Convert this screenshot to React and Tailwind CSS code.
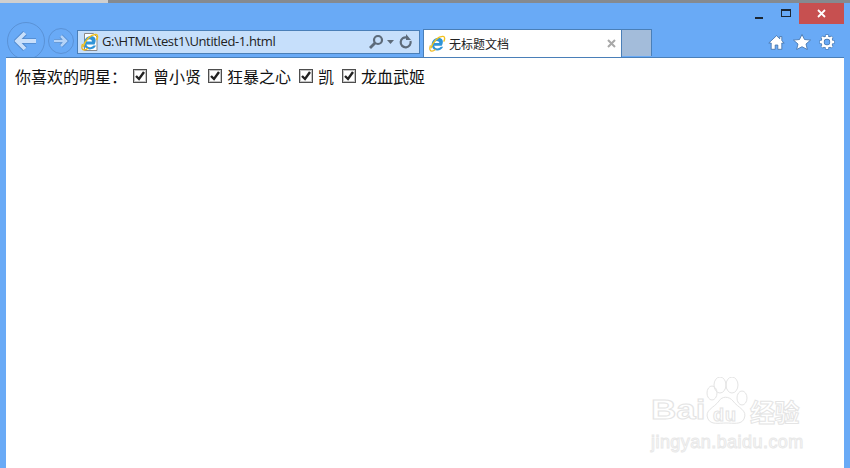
import React from 'react';

const Check = () => (
  <span className="w-[14px] h-[14px] border border-[#4d4d4d] shadow-[inset_0_0_0_1px_#c4c4c4] bg-white flex items-center justify-center shrink-0">
    <svg width="10" height="10" viewBox="0 0 10 10">
      <path d="M1 5l3 3 5-7" fill="none" stroke="#222" strokeWidth="2.400" />
    </svg>
  </span>
);

const IeIcon = ({ size, doc }) => (
  <svg width={size} height={size} viewBox="0 0 18 18">
    {doc && <path d="M3.500 .5h9l3.500 3.500v13.500h-12.500z" fill="#fff" stroke="#8a8a8a" strokeWidth="1" />}
    <path d="M13.500 11.500h-8c.3 3 4.500 4 7 1h2.500c-2 5-10.500 5.500-12-.500-1-5 2.500-9 7-9s6 4 3.500 8.500zM5.500 8.500h5.500c-.2-3-5-3-5.500 0z" fill="#2f94d8" />
    <path d="M2 14C4 7 10 1 15 1.500c2 .3 2 3 .5 5.500" fill="none" stroke="#f2c21c" strokeWidth="1.500" />
    <path d="M1.500 11C.5 14 .5 17 3 17c1.500 0 3-1 4-1.800" fill="none" stroke="#f0b71a" strokeWidth="1.300" />
  </svg>
);

const BackArrow = () => (
  <svg width="24" height="20" viewBox="0 0 24 20">
    <path d="M22 10H4M11 2l-8 8 8 8" fill="none" stroke="#4f88cc" strokeWidth="5.500" />
    <path d="M22 10H4M11 2l-8 8 8 8" fill="none" stroke="#c8dffb" strokeWidth="3.800" />
  </svg>
);

const ForwardArrow = () => (
  <svg width="16" height="14" viewBox="0 0 16 14">
    <path d="M1 7h12M8 2l5 5-5 5" fill="none" stroke="#4f88cc" strokeWidth="4" />
    <path d="M1 7h12M8 2l5 5-5 5" fill="none" stroke="#b4d3f8" strokeWidth="2.600" />
  </svg>
);

const items = [
  { name: '曾小贤', cls: 'ml-[6px] mr-[7px]' },
  { name: '狂暴之心', cls: 'ml-[5px] mr-[8px]' },
  { name: '凯', cls: 'ml-[5px] mr-[8px]' },
  { name: '龙血武姬', cls: 'ml-[5px]' },
];

const App = () => {
  return (
    <div className="w-[850px] h-[468px] overflow-hidden bg-[#69aaf6] flex flex-col font-['Noto_Sans_CJK_SC','Noto_Sans',sans-serif]">
      {/* window top edge */}
      <div className="h-[3px] flex shrink-0">
        <div className="w-[108px] bg-[#cfcfcf]"></div>
        <div className="flex-1 bg-[#858a90]"></div>
      </div>

      {/* caption buttons */}
      <div className="h-[21px] shrink-0 flex justify-end pr-[6px]">
        <div className="w-[28px] flex items-end justify-center pb-[5px]">
          <div className="w-[8px] h-[2px] bg-[#1c2733]"></div>
        </div>
        <div className="w-[26px] flex items-start justify-center pt-[6px]">
          <div className="w-[10px] h-[8px] border border-[#1c2733] border-t-2"></div>
        </div>
        <div className="w-[45px] bg-[#c75050] flex items-center justify-center">
          <svg width="9" height="9" viewBox="0 0 9 9">
            <path d="M1 1l7 7M8 1l-7 7" stroke="#fff" strokeWidth="1.800" />
          </svg>
        </div>
      </div>

      {/* toolbar */}
      <div className="h-[33px] shrink-0 flex items-end pl-[7px]">
        <div className="w-[38px] h-[38px] mb-[-3px] shrink-0 rounded-full border border-[#5a92d6] flex items-center justify-center">
          <BackArrow />
        </div>
        <div className="w-[26px] h-[26px] mb-[3px] ml-[3px] shrink-0 rounded-full border border-[#5a92d6] flex items-center justify-center">
          <ForwardArrow />
        </div>
        <div className="w-[343px] h-[24px] mb-[3px] ml-[3px] shrink-0 bg-[#c6dffb] border border-[#4a7fb8] flex items-center pl-[3px] pr-[4px]">
          <IeIcon size={18} doc />
          <span className="ml-[3px] flex-1 text-[13px] text-[#222] font-['Open_Sans',sans-serif] tracking-[-0.37px]">G:\HTML\test1\Untitled-1.html</span>
          <svg width="46" height="16" viewBox="0 0 46 16">
            <circle cx="9" cy="6" r="4" fill="none" stroke="#5d6b7a" strokeWidth="2.200" />
            <path d="M6 9l-5 5" stroke="#5d6b7a" strokeWidth="2.800" />
            <path d="M18 6h7l-3.500 4z" fill="#5d6b7a" />
            <path d="M38 3.500a5 5 0 1 0 3.500 3.500" fill="none" stroke="#5d6b7a" strokeWidth="2.200" />
            <path d="M37 0v6h5z" fill="#5d6b7a" />
          </svg>
        </div>
        <div className="w-[199px] h-[28px] ml-[3px] shrink-0 bg-white border-t border-x border-[#4a7fb8] flex items-center pl-[5px] pr-[5px]">
          <IeIcon size={17} />
          <span className="ml-[3px] flex-1 text-[12px] text-[#222]">无标题文档</span>
          <svg width="9" height="9" viewBox="0 0 9 9">
            <path d="M1 1l7 7M8 1l-7 7" stroke="#a8a8a8" strokeWidth="2" />
          </svg>
        </div>
        <div className="w-[30px] h-[27px] mb-[1px] shrink-0 bg-[#a3bcda] border-t border-r border-[#4a7fb8]"></div>
        <div className="flex-1 self-stretch flex items-center justify-end gap-[8px] pr-[15px] pt-[3px]">
          <svg width="17" height="15" viewBox="0 0 17 15">
            <path d="M8.500 .7L.8 8h2.400v6.300h4v-4.300h2.600v4.300h4V8h2.400l-2.400-2.300V1.500h-2v2.300z" fill="#fff" stroke="#3f6fa6" strokeWidth="0.800" />
          </svg>
          <svg width="18" height="16" viewBox="0 0 18 16">
            <path d="M9 .5l2.500 5 6 .6-4.500 3.900 1.300 5.500L9 12.700l-5.300 2.800L5 10 .5 6.100l6-.6z" fill="#fff" stroke="#3f6fa6" strokeWidth="0.800" />
          </svg>
          <svg width="16" height="16" viewBox="0 0 16 16">
            <path d="M8 .5v3M8 12.500v3M.5 8h3M12.500 8h3M2.700 2.700l2.100 2.100M11.200 11.200l2.100 2.100M13.300 2.700l-2.100 2.100M4.800 11.200l-2.100 2.100" stroke="#3f6fa6" strokeWidth="3.400" />
            <circle cx="8" cy="8" r="4.400" fill="none" stroke="#3f6fa6" strokeWidth="3.600" />
            <path d="M8 .9v3M8 12.100v3M.9 8h3M12.100 8h3M3 3l2 2M11 11l2 2M13 3l-2 2M5 11l-2 2" stroke="#fff" strokeWidth="2.400" />
            <circle cx="8" cy="8" r="4.400" fill="none" stroke="#fff" strokeWidth="2.400" />
          </svg>
        </div>
      </div>

      {/* page */}
      <div className="flex-1 mx-[6px] bg-white border-t border-[#4a7fb8] relative">
        <div className="flex items-center pl-[9px] pt-[7px] text-[16px] leading-[22px] text-[#111]">
          <span className="mr-[6px]">你喜欢的明星：</span>
          {items.map((item) => (
            <React.Fragment key={item.name}>
              <Check />
              <span className={item.cls}>{item.name}</span>
            </React.Fragment>
          ))}
        </div>

        {/* watermark */}
        <div className="absolute left-[645px] top-[317px] w-[160px] h-[75px] text-white">
          <span className="absolute left-0 top-[20px] origin-left scale-x-[1.25] text-[28px] leading-[30px] font-bold font-['Liberation_Sans',sans-serif] [-webkit-text-stroke:1px_#e4e4e4]">Bai</span>
          <svg className="absolute left-[52px] top-[2px]" width="46" height="48" viewBox="0 0 46 48" fill="none" stroke="#e4e4e4" strokeWidth="1">
            <ellipse cx="9" cy="16" rx="5" ry="7" />
            <ellipse cx="17" cy="8" rx="6" ry="8" />
            <ellipse cx="29" cy="8" rx="6" ry="8" />
            <ellipse cx="39" cy="21" rx="5" ry="7" />
            <path d="M5 42c-4-9 6-11 11-18 3-5 10-5 14 0 5 7 15 9 11 18-3 6-11 4-18 4s-15 2-18-4z" />
          </svg>
          <span className="absolute left-[62px] top-[30px] text-[18px] leading-[20px] font-bold tracking-[1px] font-['Liberation_Sans',sans-serif] [-webkit-text-stroke:1px_#e4e4e4]">du</span>
          <span className="absolute left-[99px] top-[22px] text-[25px] leading-[28px] font-bold tracking-[-0.5px] [-webkit-text-stroke:1px_#e4e4e4]">经验</span>
          <span className="absolute left-0 top-[57px] text-[18px] leading-[20px] tracking-[0.45px] font-['Liberation_Sans',sans-serif] [-webkit-text-stroke:1px_#e8e8e8]">jingyan.baidu.com</span>
        </div>
      </div>
    </div>
  );
};

export default App;
